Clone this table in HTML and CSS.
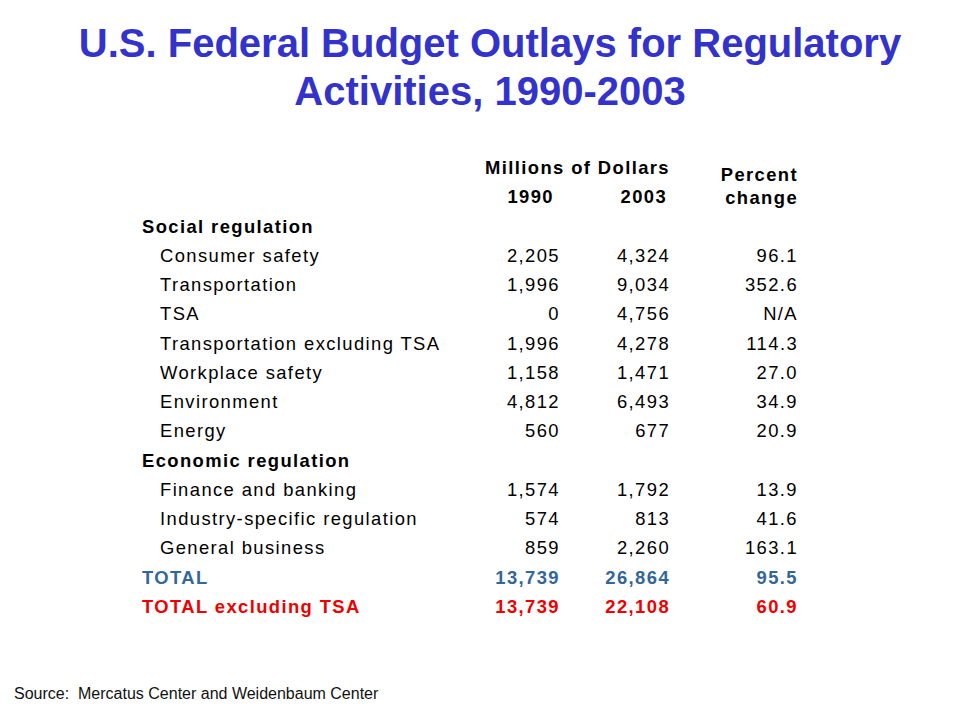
FILE: index.html
```html
<!DOCTYPE html>
<html lang="en">
<head>
<meta charset="utf-8">
<title>U.S. Federal Budget Outlays for Regulatory Activities, 1990-2003</title>
<link rel="stylesheet" href="styles.css">
</head>
<body>
<div class="slide">
  <h1 class="title">U.S. Federal Budget Outlays for Regulatory<br>Activities, 1990-2003</h1>
  <table class="budget">
    <colgroup>
      <col class="c-label"><col class="c-y1"><col class="c-y2"><col class="c-pct">
    </colgroup>
    <tr class="head">
      <td></td>
      <td colspan="2" class="millions">Millions of Dollars</td>
      <td rowspan="2" class="pct-head">Percent<br>change</td>
    </tr>
    <tr class="head">
      <td></td>
      <td class="yr yr1">1990</td>
      <td class="yr yr2">2003</td>
    </tr>
    <tr class="group"><td>Social regulation</td><td></td><td></td><td></td></tr>
    <tr><td class="item">Consumer safety</td><td class="num">2,205</td><td class="num">4,324</td><td class="num">96.1</td></tr>
    <tr><td class="item">Transportation</td><td class="num">1,996</td><td class="num">9,034</td><td class="num">352.6</td></tr>
    <tr><td class="item">TSA</td><td class="num">0</td><td class="num">4,756</td><td class="num">N/A</td></tr>
    <tr><td class="item">Transportation excluding TSA</td><td class="num">1,996</td><td class="num">4,278</td><td class="num">114.3</td></tr>
    <tr><td class="item">Workplace safety</td><td class="num">1,158</td><td class="num">1,471</td><td class="num">27.0</td></tr>
    <tr><td class="item">Environment</td><td class="num">4,812</td><td class="num">6,493</td><td class="num">34.9</td></tr>
    <tr><td class="item">Energy</td><td class="num">560</td><td class="num">677</td><td class="num">20.9</td></tr>
    <tr class="group"><td>Economic regulation</td><td></td><td></td><td></td></tr>
    <tr><td class="item">Finance and banking</td><td class="num">1,574</td><td class="num">1,792</td><td class="num">13.9</td></tr>
    <tr><td class="item">Industry-specific regulation</td><td class="num">574</td><td class="num">813</td><td class="num">41.6</td></tr>
    <tr><td class="item">General business</td><td class="num">859</td><td class="num">2,260</td><td class="num">163.1</td></tr>
    <tr class="total"><td>TOTAL</td><td class="num">13,739</td><td class="num">26,864</td><td class="num">95.5</td></tr>
    <tr class="total-ex"><td>TOTAL excluding TSA</td><td class="num">13,739</td><td class="num">22,108</td><td class="num">60.9</td></tr>
  </table>
  <p class="source">Source:&nbsp; Mercatus Center and Weidenbaum Center</p>
</div>
</body>
</html>
```
FILE: styles.css
```css
html, body {
  margin: 0;
  padding: 0;
  background: #ffffff;
}

.slide {
  width: 960px;
  height: 720px;
  display: flex;
  flex-direction: column;
  font-family: "Liberation Sans", Arial, sans-serif;
  color: #000000;
  box-sizing: border-box;
}

.title {
  margin: 19px 0 0 0;
  padding-left: 20px;
  font-size: 40px;
  line-height: 48px;
  font-weight: bold;
  text-align: center;
  color: #3333cc;
}

.budget {
  margin: 38px 0 0 142px;
  border-collapse: collapse;
  table-layout: fixed;
  width: 656px;
  font-size: 18.4px;
  letter-spacing: 1.4px;
}

.c-label { width: 331px; }
.c-y1 { width: 87px; }
.c-y2 { width: 110px; }
.c-pct { width: 128px; }

.budget td {
  padding: 0;
  height: 29.25px;
  line-height: 29.25px;
  white-space: nowrap;
  vertical-align: top;
}

.head td {
  font-weight: bold;
}

.millions {
  text-align: center;
  padding-left: 12px !important;
}

.yr {
  text-align: right;
}

.yr1 { padding-right: 6px !important; }
.yr2 { padding-right: 3px !important; }

.budget td.pct-head {
  text-align: right;
  line-height: 23px;
  vertical-align: bottom;
  padding-bottom: 3px;
  padding-right: 0;
}

.group td {
  font-weight: bold;
}

.item {
  padding-left: 18px !important;
}

.num {
  text-align: right;
}

.total td {
  font-weight: bold;
  color: #336699;
}

.total-ex td {
  font-weight: bold;
  color: #ee0000;
}

.source {
  margin: auto 0 0 0;
  padding: 0 0 16px 14px;
  font-size: 16px;
  line-height: 20px;
  color: #111111;
}
```
